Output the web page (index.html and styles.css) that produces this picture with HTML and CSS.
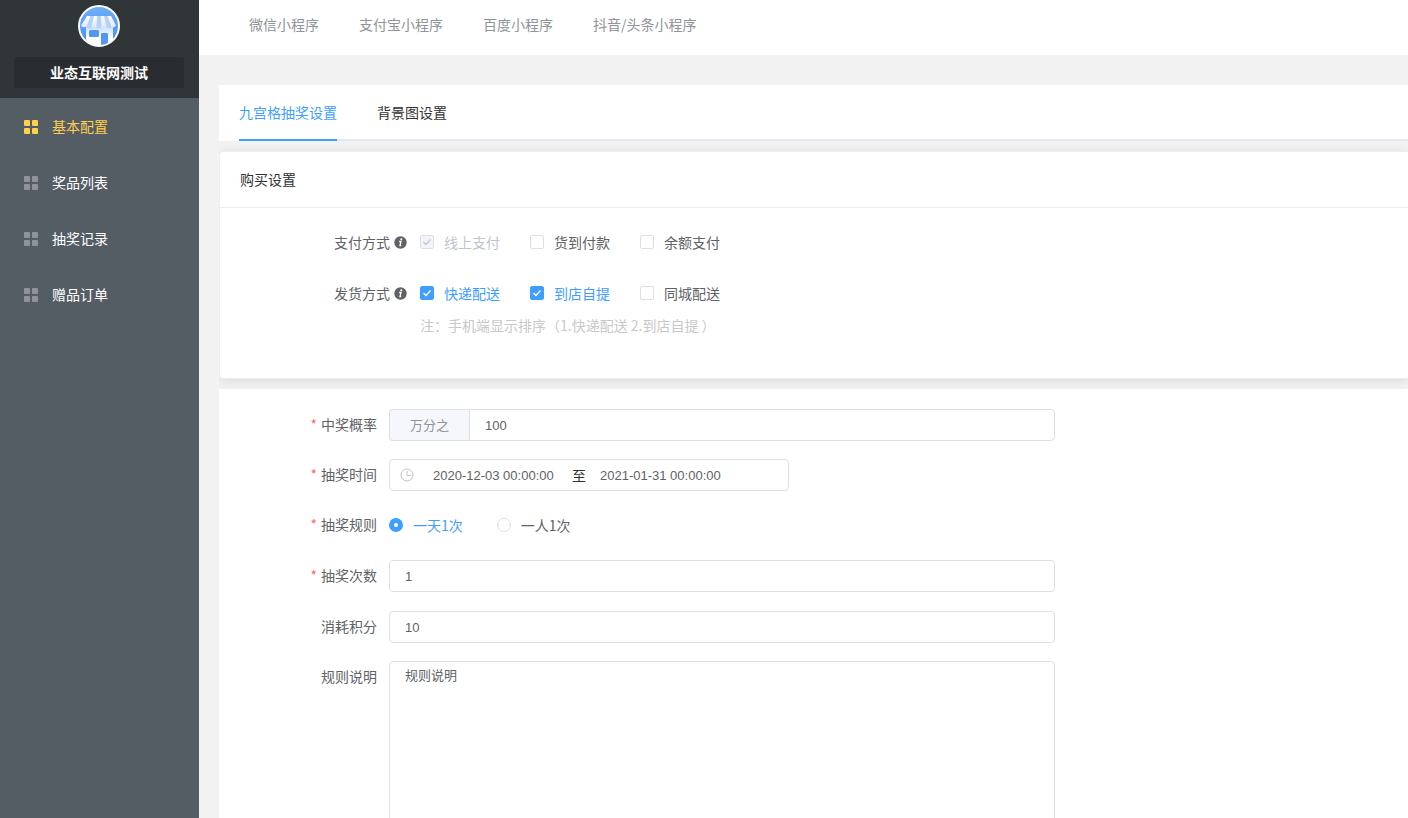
FILE: index.html
```html
<!DOCTYPE html>
<html lang="zh-CN">
<head>
    <meta charset="UTF-8">
    <meta name="viewport" content="width=device-width, initial-scale=1.0">
    <title>九宫格抽奖设置</title>
    <link rel="stylesheet" href="styles.css">
</head>
<body>

    <svg class="sprite" aria-hidden="true">
        <symbol id="icon-menu" viewBox="0 0 14 14">
            <rect x="0" y="0" width="6" height="6" rx="1"/>
            <rect x="8" y="0" width="6" height="6" rx="1"/>
            <rect x="0" y="8" width="6" height="6" rx="1"/>
            <rect x="8" y="8" width="6" height="6" rx="1"/>
        </symbol>
        <symbol id="icon-info" viewBox="0 0 13 13">
            <circle cx="6.5" cy="6.5" r="6.2" fill="#606266"/>
            <circle cx="7.3" cy="3.3" r="1.1" fill="#fff"/>
            <path d="M5.1 5.5h1.9L6 9.6h1.2" fill="none" stroke="#fff" stroke-width="1.3"/>
        </symbol>
    </svg>

    <div class="app">
        <aside class="sidebar">
            <div class="shop">
                <svg class="shop-logo" viewBox="0 0 42 42" aria-hidden="true">
                    <defs>
                        <linearGradient id="sky" x1="0" y1="0" x2="0" y2="1">
                            <stop offset="0" stop-color="#6db0f8"/>
                            <stop offset="1" stop-color="#4a8af0"/>
                        </linearGradient>
                        <linearGradient id="wall" x1="0" y1="0" x2="0" y2="1">
                            <stop offset="0" stop-color="#c3dafc"/>
                            <stop offset=".6" stop-color="#fff"/>
                        </linearGradient>
                        <linearGradient id="roof" x1="0" y1="0" x2="0" y2="1">
                            <stop offset="0" stop-color="#fff"/>
                            <stop offset="1" stop-color="#dbe8fd"/>
                        </linearGradient>
                        <clipPath id="round"><circle cx="21" cy="21" r="19.5"/></clipPath>
                    </defs>
                    <circle cx="21" cy="21" r="20" fill="url(#sky)"/>
                    <g clip-path="url(#round)">
                        <path d="M8 20h27v22H8z" fill="url(#wall)"/>
                        <path d="M9 11h24l5 9.500a3 2.500 0 0 1-5 1a3 2.500 0 0 1-5 0a3 2.500 0 0 1-5 0a3 2.500 0 0 1-5 0a3 2.500 0 0 1-5 0a3 2.500 0 0 1-5 0a3 2.500 0 0 1-5-1z" fill="url(#roof)"/>
                        <path d="M12.500 11h3.500l-2.500 10.500a2.500 2 0 0 1-5 0zM19 11h4l.500 10.500a2.500 2 0 0 1-5 0zM26 11h3.500l4 10.500a2.500 2 0 0 1-5 0z" fill="#b4d1fb"/>
                        <rect x="11" y="25" width="10" height="7" rx="1.500" fill="#5596f3"/>
                        <path d="M23 41V29q0-1 1-1h5q1 0 1 1v12z" fill="#5596f3"/>
                    </g>
                    <circle cx="21" cy="21" r="20" fill="none" stroke="#fff" stroke-width="2"/>
                </svg>
                <div class="shop-name">业态互联网测试</div>
            </div>
            <nav class="menu">
                <a class="menu-item active" href="#"><svg class="menu-icon"><use href="#icon-menu"/></svg>基本配置</a>
                <a class="menu-item" href="#"><svg class="menu-icon"><use href="#icon-menu"/></svg>奖品列表</a>
                <a class="menu-item" href="#"><svg class="menu-icon"><use href="#icon-menu"/></svg>抽奖记录</a>
                <a class="menu-item" href="#"><svg class="menu-icon"><use href="#icon-menu"/></svg>赠品订单</a>
            </nav>
        </aside>

        <div class="page">
            <nav class="topbar">
                <a href="#">微信小程序</a>
                <a href="#">支付宝小程序</a>
                <a href="#">百度小程序</a>
                <a href="#">抖音/头条小程序</a>
            </nav>

            <main class="content">
                <div class="tabs">
                    <div class="tabs-nav" role="tablist">
                        <button class="tab active" type="button" role="tab" aria-selected="true">九宫格抽奖设置</button>
                        <button class="tab" type="button" role="tab" aria-selected="false">背景图设置</button>
                    </div>
                </div>

                <section class="card">
                    <h2 class="card-title">购买设置</h2>
                    <div class="card-body">
                        <div class="option-row" role="group" aria-labelledby="pay-label">
                            <span class="option-label" id="pay-label">支付方式<svg class="info"><use href="#icon-info"/></svg></span>
                            <label class="check"><input type="checkbox" checked disabled><span>线上支付</span></label>
                            <label class="check"><input type="checkbox"><span>货到付款</span></label>
                            <label class="check"><input type="checkbox"><span>余额支付</span></label>
                        </div>
                        <div class="option-row" role="group" aria-labelledby="ship-label">
                            <span class="option-label" id="ship-label">发货方式<svg class="info"><use href="#icon-info"/></svg></span>
                            <label class="check"><input type="checkbox" checked><span>快递配送</span></label>
                            <label class="check"><input type="checkbox" checked><span>到店自提</span></label>
                            <label class="check"><input type="checkbox"><span>同城配送</span></label>
                        </div>
                        <p class="note">注：手机端显示排序（1.快递配送 2.到店自提 ）</p>
                    </div>
                </section>

                <form class="form">
                    <div class="form-row">
                        <label class="form-label required" for="rate">中奖概率</label>
                        <div class="group">
                            <span class="prefix">万分之</span>
                            <input class="field" type="text" id="rate" value="100">
                        </div>
                    </div>
                    <div class="form-row">
                        <label class="form-label required" for="start">抽奖时间</label>
                        <div class="range">
                            <svg class="clock" viewBox="0 0 14 14" aria-hidden="true">
                                <circle cx="7" cy="7" r="6"/>
                                <path d="M7 3v4.500h3.500"/>
                            </svg>
                            <input type="text" id="start" value="2020-12-03 00:00:00">
                            <span>至</span>
                            <input type="text" aria-label="结束时间" value="2021-01-31 00:00:00">
                        </div>
                    </div>
                    <div class="form-row tall" role="radiogroup" aria-labelledby="rule-label">
                        <span class="form-label required" id="rule-label">抽奖规则</span>
                        <div class="radios">
                            <label class="check"><input type="radio" name="rule" checked><span>一天1次</span></label>
                            <label class="check"><input type="radio" name="rule"><span>一人1次</span></label>
                        </div>
                    </div>
                    <div class="form-row tall">
                        <label class="form-label required" for="times">抽奖次数</label>
                        <input class="field" type="text" id="times" value="1">
                    </div>
                    <div class="form-row">
                        <label class="form-label" for="points">消耗积分</label>
                        <input class="field" type="text" id="points" value="10">
                    </div>
                    <div class="form-row">
                        <label class="form-label" for="desc">规则说明</label>
                        <textarea class="field" id="desc" rows="12">规则说明</textarea>
                    </div>
                </form>
            </main>
        </div>
    </div>

</body>
</html>
```
FILE: styles.css
```css
* {
    box-sizing: border-box;
}
body {
    margin: 0;
    background-color: #f2f2f2;
    color: #303133;
    font-family: "Noto Sans CJK SC", sans-serif;
    font-size: 14px;
    line-height: 20px;
}
a {
    color: inherit;
    text-decoration: none;
}
input, textarea, button {
    font-family: inherit;
    margin: 0;
}
.sprite {
    display: none;
}
.app {
    display: flex;
    height: 100vh;
}

/* 左侧菜单 */
.sidebar {
    flex: 0 0 199px;
    background-color: #545c64;
}
.shop {
    display: flex;
    flex-direction: column;
    align-items: center;
    gap: 10px;
    padding: 5px 15px 10px 14px;
    background-color: #303538;
}
.shop-logo {
    width: 42px;
    height: 42px;
}
.shop-name {
    align-self: stretch;
    padding: 5px 0 6px;
    border-radius: 3px;
    background-color: #292c31;
    color: #fff;
    font-weight: bold;
    text-align: center;
}
.menu-item {
    display: flex;
    align-items: center;
    gap: 14px;
    height: 56px;
    padding: 0 24px;
    color: #fff;
}
.menu-icon {
    width: 14px;
    height: 14px;
    margin-top: 2px;
    fill: #909399;
}
.menu-item.active {
    color: #ffd04b;
}
.menu-item.active .menu-icon {
    fill: #ffd04b;
}

/* 右侧内容 */
.page {
    flex: 1;
    min-width: 0;
    overflow-y: auto;
    scrollbar-width: none;
}
.topbar {
    display: flex;
    gap: 40px;
    padding: 14px 50px 21px;
    background-color: #fff;
    color: #909399;
}
.content {
    margin: 30px 0 0 20px;
    overflow: hidden;
}
.tabs {
    padding-left: 20px;
    background-color: #fff;
}
.tabs-nav {
    display: flex;
    gap: 40px;
    box-shadow: inset 0 -2px #e4e7ed;
}
.tab {
    height: 56px;
    padding: 0;
    border: none;
    border-bottom: 2px solid transparent;
    background: none;
    color: #303133;
    font-size: 14px;
    cursor: pointer;
}
.tab.active {
    border-bottom-color: #409eff;
    color: #409eff;
}
.card {
    margin: 10px 0;
    border: 1px solid #ebeef5;
    border-right: none;
    border-radius: 4px 0 0 4px;
    background-color: #fff;
    box-shadow: 0 2px 12px rgba(0, 0, 0, 0.1);
}
.card-title {
    margin: 0;
    padding: 17px 20px 18px;
    border-bottom: 1px solid #ebeef5;
    font-size: 14px;
    font-weight: normal;
}
.card-body {
    padding: 24px 0 43px;
    color: #606266;
}
.option-row {
    display: flex;
    align-items: center;
    gap: 30px;
    margin-bottom: 31px;
}
.option-row + .option-row {
    margin-bottom: 12px;
}
.option-label {
    display: flex;
    justify-content: flex-end;
    align-items: center;
    gap: 4px;
    width: 187px;
    margin-right: -17px;
}
.info {
    width: 13px;
    height: 13px;
}
.check {
    display: flex;
    align-items: center;
    gap: 10px;
    cursor: pointer;
}
.check input {
    appearance: none;
    width: 14px;
    height: 14px;
    border: 1px solid #dcdfe6;
    border-radius: 2px;
    background: #fff center / 12px 12px no-repeat;
}
.check input:checked {
    border-color: #409eff;
    background-color: #409eff;
    background-image: url("data:image/svg+xml,%3Csvg xmlns='http://www.w3.org/2000/svg' viewBox='0 0 12 12'%3E%3Cpath d='M2.500 6l2.500 2.500 4.500-5' fill='none' stroke='%23fff' stroke-width='1.3'/%3E%3C/svg%3E");
}
.check input:disabled {
    border-color: #dcdfe6;
    background-color: #f2f6fc;
    background-image: url("data:image/svg+xml,%3Csvg xmlns='http://www.w3.org/2000/svg' viewBox='0 0 12 12'%3E%3Cpath d='M2.500 6l2.500 2.500 4.500-5' fill='none' stroke='%23c0c4cc' stroke-width='1.3'/%3E%3C/svg%3E");
}
.check input:checked + span {
    color: #409eff;
}
.check input:disabled + span {
    color: #c0c4cc;
}
.check input[type="radio"] {
    border-radius: 50%;
}
.check input[type="radio"]:checked {
    background: #fff;
    border-width: 5px;
}
.note {
    margin: 0 0 0 200px;
    color: #c8c8c8;
}

/* 抽奖表单 */
.form {
    display: flex;
    flex-direction: column;
    gap: 18px;
    padding: 20px 20px 40px 0;
    background-color: #fff;
    color: #606266;
}
.form-row {
    display: flex;
    align-items: flex-start;
}
.form-row.tall {
    min-height: 33px;
}
.form-label {
    flex: 0 0 170px;
    padding-right: 12px;
    line-height: 30px;
    text-align: right;
}
.required::before {
    content: "*";
    margin-right: 4px;
    color: #f56c6c;
}
.field {
    flex: 1;
    min-width: 0;
    max-width: 666px;
    height: 32px;
    padding: 0 15px;
    border: 1px solid #dcdfe6;
    border-radius: 4px;
    background-color: #fff;
    color: #606266;
    font-family: "Liberation Sans", "Noto Sans CJK SC", sans-serif;
    font-size: 13px;
}
textarea.field {
    height: auto;
    padding: 4px 15px;
    line-height: 20px;
    resize: vertical;
}
.group {
    display: flex;
    flex: 1;
    max-width: 666px;
}
.group .field {
    border-radius: 0 4px 4px 0;
}
.prefix {
    padding: 0 20px;
    border: 1px solid #dcdfe6;
    border-right: none;
    border-radius: 4px 0 0 4px;
    background-color: #f5f7fa;
    color: #909399;
    font-size: 13px;
    line-height: 30px;
}
.range {
    display: flex;
    align-items: center;
    gap: 9px;
    width: 400px;
    height: 32px;
    padding: 0 10px;
    border: 1px solid #dcdfe6;
    border-radius: 4px;
    color: #303133;
}
.range input {
    width: 135px;
    padding: 0 5px;
    border: none;
    color: #606266;
    font-family: "Liberation Sans", sans-serif;
    font-size: 13px;
}
.clock {
    width: 14px;
    height: 14px;
    margin-right: 5px;
    fill: none;
    stroke: #c0c4cc;
}
.radios {
    display: flex;
    align-items: center;
    gap: 34px;
    height: 32px;
}
```
